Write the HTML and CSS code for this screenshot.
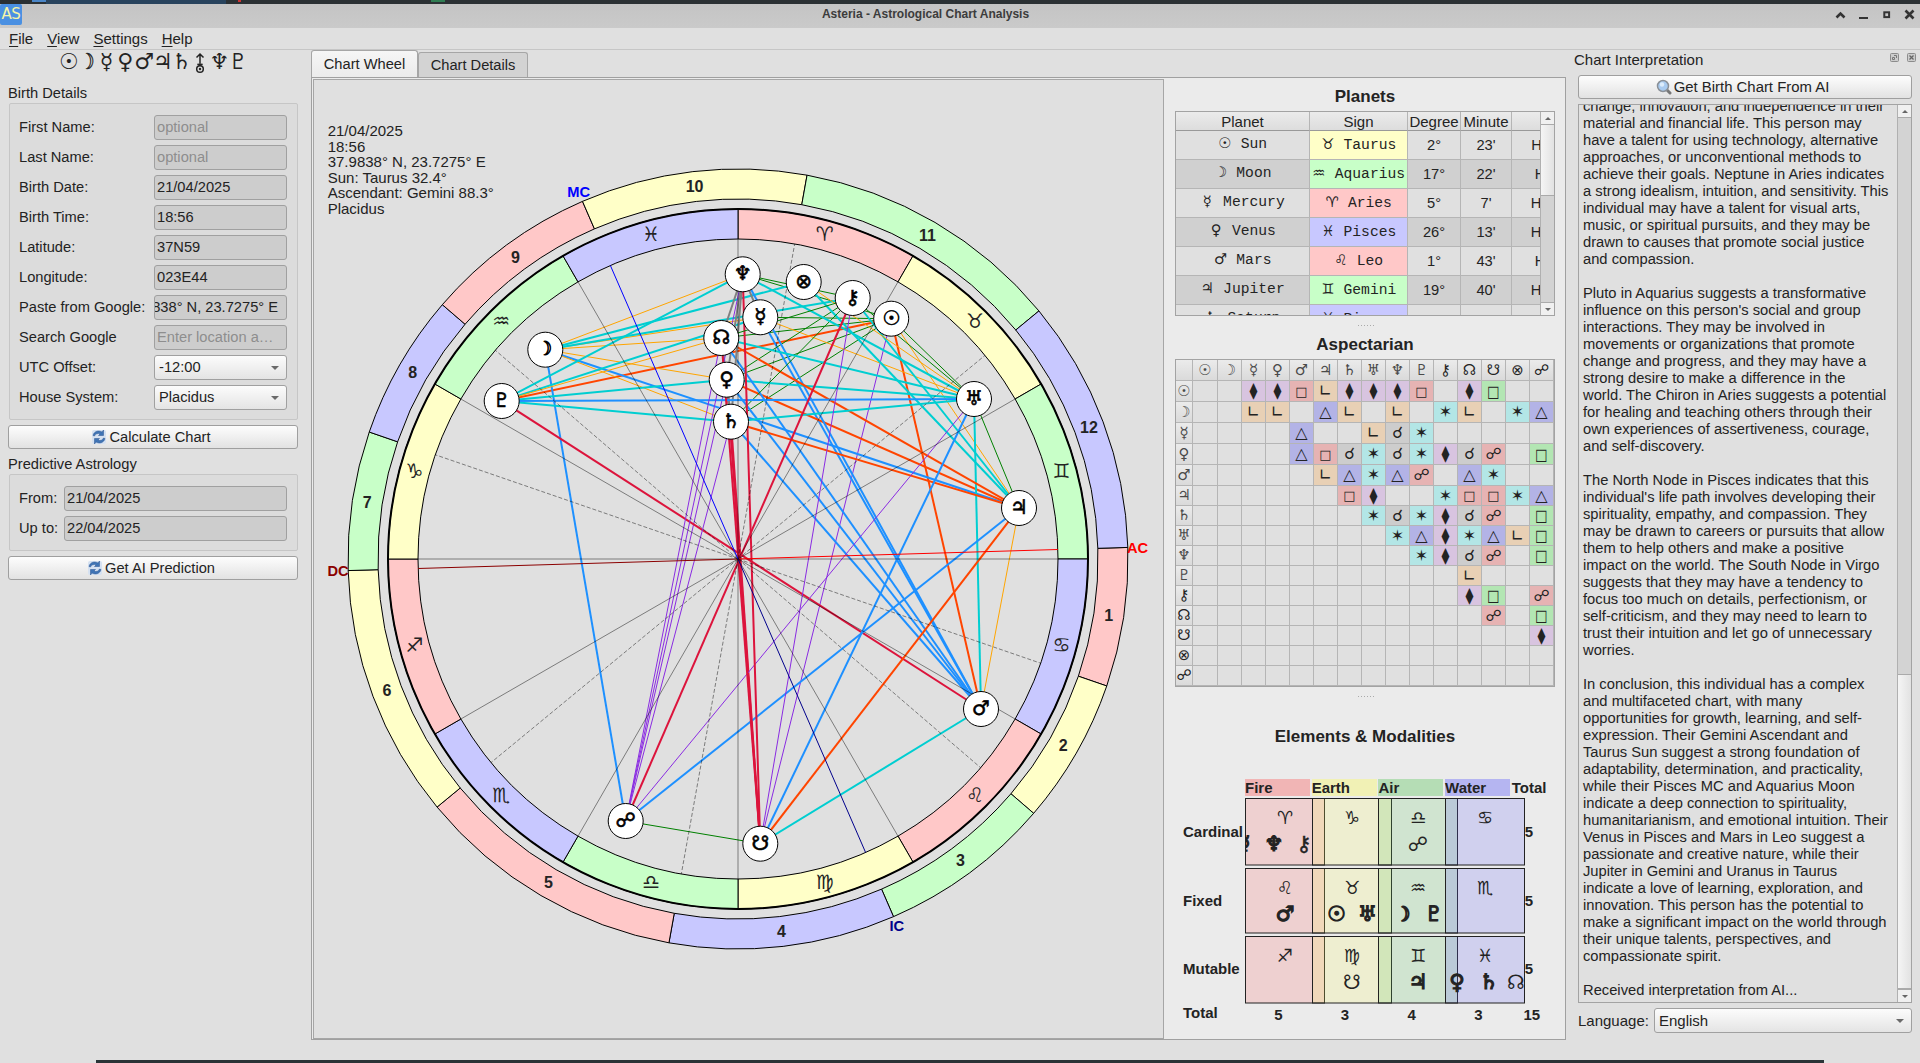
FILE: index.html
```html
<!DOCTYPE html>
<html lang="en">
<head>
<meta charset="utf-8">
<title>Asteria - Astrological Chart Analysis</title>
<link rel="stylesheet" href="styles.css">
</head>
<body>
<svg width="0" height="0" class="defs">
  <symbol id="refresh" viewBox="0 0 16 16">
    <rect x="1" y="1" width="14" height="14" rx="2" fill="#d5e1f1"/>
    <path d="M2 6.500C3 2.500 7 .8 11 3L12.500 1V6.500H7.500L9 5C7 4 4.500 4.500 3.500 7ZM14 9.500C13 13.500 9 15.200 5 13L3.500 15V9.500H8.500L7 11C9 12 11.500 11.500 12.500 9Z" fill="#3f74b5" stroke="#2a5590" stroke-width=".5"/>
  </symbol>
</svg>
<div class="desk-top"><i class="c1"></i><i class="c2"></i><i class="c3"></i><i class="c4"></i></div>
<header class="titlebar">
  <span class="app-icon">AS</span>
  <span class="title">Asteria - Astrological Chart Analysis</span>
  <svg class="winbtns" width="96" height="24" fill="none" stroke="#333" stroke-width="2.600">
    <path d="M12.500 13.500L16.500 9.500L20.500 13.500"/><path d="M35 14H44" stroke-width="2"/><rect x="60.300" y="8.300" width="4.800" height="4.800" stroke-width="2"/><path d="M81.500 6.500L89.500 14.500M89.500 6.500L81.500 14.500"/>
  </svg>
</header>
<nav class="menubar"><span><u>F</u>ile</span><span><u>V</u>iew</span><span><u>S</u>ettings</span><span><u>H</u>elp</span></nav>
<main class="workspace">
  <aside class="left">
    <div class="logo"><span>☉</span><span class="moon">☽</span><span>☿</span><span>♀</span><span>♂</span><span>♃</span><span>♄</span><span><svg width="10" height="22" fill="none" stroke="#232323" stroke-width="1.500"><path d="M5 13.500V2M1.500 5.500L5 2L8.500 5.500M2.500 12L5 13.500L7.500 12"/><circle cx="5" cy="17" r="3.300"/><circle cx="5" cy="17" r=".5"/></svg></span><span>♆</span><span>♇</span></div>
    <h2 class="cap">Birth Details</h2>
    <section class="group birth">
      <label>First Name:</label><div class="field ph">optional</div>
      <label>Last Name:</label><div class="field ph">optional</div>
      <label>Birth Date:</label><div class="field">21/04/2025</div>
      <label>Birth Time:</label><div class="field">18:56</div>
      <label>Latitude:</label><div class="field">37N59</div>
      <label>Longitude:</label><div class="field">023E44</div>
      <label>Paste from Google:</label><div class="field scrolled"><span>838° N, 23.7275° E</span></div>
      <label>Search Google</label><div class="field ph">Enter location a…</div>
      <label>UTC Offset:</label><div class="combo">-12:00</div>
      <label>House System:</label><div class="combo">Placidus</div>
    </section>
    <button class="btn"><svg width="16" height="16"><use href="#refresh"/></svg>Calculate Chart</button>
    <h2 class="cap cap2">Predictive Astrology</h2>
    <section class="group predict">
      <label>From:</label><div class="field">21/04/2025</div>
      <label>Up to:</label><div class="field">22/04/2025</div>
    </section>
    <button class="btn"><svg width="16" height="16"><use href="#refresh"/></svg>Get AI Prediction</button>
  </aside>
  <section class="center">
    <div class="tabs"><div class="tab active">Chart Wheel</div><div class="tab">Chart Details</div></div>
    <div class="pane">
      <div class="wheel-view"><svg id="wheel" width="849" height="958" viewBox="314 80 849 958"></svg></div>
      <div class="side">
        <h3 class="t1">Planets</h3>
        <div class="frame planets">
          <div class="prows" id="planets"></div>
          <div class="sbar"><b class="up"></b><i class="thumb"></i><em></em><b class="down"></b></div>
        </div>
        <div class="hdots"></div>
        <h3 class="t2">Aspectarian</h3>
        <div class="frame aspects" id="aspects"></div>
        <div class="hdots"></div>
        <h3 class="t3">Elements &amp; Modalities</h3>
        <div class="elements" id="elements"></div>
      </div>
    </div>
  </section>
  <aside class="dock">
    <div class="dock-title"><span>Chart Interpretation</span>
      <svg width="27" height="10" fill="none" stroke="#8c8c8c"><rect x=".5" y=".5" width="8" height="8" rx="1" fill="#ccc"/><path d="M4 2.500H6.500V5M2.500 4.500H4.500V6.500H2.500Z" stroke="#777"/><rect x="17.500" y=".5" width="8" height="8" rx="1" fill="#ccc"/><path d="M19.500 2.500L23.500 6.500M23.500 2.500L19.500 6.500" stroke="#666" stroke-width="1.300"/></svg>
    </div>
    <button class="btn"><svg width="16" height="17"><path d="M10 10L14 14" stroke="#777" stroke-width="3" stroke-linecap="round"/><circle cx="7" cy="7" r="5.500" fill="#a9cbf0" stroke="#8a9097" stroke-width="1.500"/><circle cx="6" cy="5.500" r="2.200" fill="#dcecfb"/></svg>Get Birth Chart From AI</button>
    <div class="frame textedit">
<div class="txt">change, innovation, and independence in their
material and financial life. This person may
have a talent for using technology, alternative
approaches, or unconventional methods to
achieve their goals. Neptune in Aries indicates
a strong idealism, intuition, and sensitivity. This
individual may have a talent for visual arts,
music, or spiritual pursuits, and they may be
drawn to causes that promote social justice
and compassion.

Pluto in Aquarius suggests a transformative
influence on this person's social and group
interactions. They may be involved in
movements or organizations that promote
change and progress, and they may have a
strong desire to make a difference in the
world. The Chiron in Aries suggests a potential
for healing and teaching others through their
own experiences of assertiveness, courage,
and self-discovery.

The North Node in Pisces indicates that this
individual's life path involves developing their
spirituality, empathy, and compassion. They
may be drawn to careers or pursuits that allow
them to help others and make a positive
impact on the world. The South Node in Virgo
suggests that they may have a tendency to
focus too much on details, perfectionism, or
self-criticism, and they may need to learn to
trust their intuition and let go of unnecessary
worries.

In conclusion, this individual has a complex
and multifaceted chart, with many
opportunities for growth, learning, and self-
expression. Their Gemini Ascendant and
Taurus Sun suggest a strong foundation of
adaptability, determination, and practicality,
while their Pisces MC and Aquarius Moon
indicate a deep connection to spirituality,
humanitarianism, and emotional intuition. Their
Venus in Pisces and Mars in Leo suggest a
passionate and creative nature, while their
Jupiter in Gemini and Uranus in Taurus
indicate a love of learning, exploration, and
innovation. This person has the potential to
make a significant impact on the world through
their unique talents, perspectives, and
compassionate spirit.

Received interpretation from AI...</div>
      <div class="sbar"><b class="up"></b><em></em><i class="thumb"></i><b class="down"></b></div>
    </div>
    <div class="lang"><span>Language:</span><div class="combo">English</div></div>
  </aside>
</main>
<div class="desk-bottom"></div>
<script src="chart.js"></script>
</body>
</html>
```
FILE: styles.css
```css
* { box-sizing: border-box; }
body { margin: 0; width: 1920px; height: 1063px; overflow: hidden; display: flex; flex-direction: column; background: #e0e0e0; color: #232323; font: 14.667px/17px "Liberation Sans", Arial, "DejaVu Sans", sans-serif; }
.defs { position: absolute; }
.desk-top { height: 4px; flex: none; background: #2b3134; display: flex; }
.desk-top i { height: 2px; width: 14px; background: #4a90e2; }
.desk-top .c1 { margin-left: 32px; background: #4a86c8; }
.desk-top .c2 { width: 180px; height: 4px; background: #28435d; }
.desk-top .c3 { width: 3px; margin-left: 12px; background: #c33; }
.desk-top .c4 { margin-left: 190px; background: #2f7d52; }
.titlebar { height: 24px; flex: none; background: linear-gradient(#c4c4c4, #cacaca); display: flex; align-items: center; justify-content: space-between; }
.app-icon { width: 22px; height: 21px; background: #4a90e2; color: #f5f5a8; border-radius: 2px; font: 15px/21px "DejaVu Sans", sans-serif; text-align: center; letter-spacing: -.5px; align-self: flex-start; }
.title { font-weight: bold; font-size: 12px; line-height: 20px; align-self: flex-start; margin-left: 5px; color: #3c3c3c; }
.menubar { height: 22px; flex: none; border-bottom: 1px solid #c6c6c6; padding: 2px 0 0 9px; display: flex; gap: 14px; font-size: 15px; line-height: 17px; }
.menubar u { text-underline-offset: 2px; }
.workspace { flex: 1; display: grid; grid-template-columns: 311px 1255px 354px; min-height: 0; }
.left { padding: 0 13px 0 8px; }
.logo { display: flex; justify-content: center; height: 27px; padding-left: 1px; font: 22px/24px "DejaVu Sans", sans-serif; }
.logo span { width: 18.8px; display: flex; justify-content: center; }
.logo .moon { transform: scaleX(.72); -webkit-text-stroke: .5px; }
.logo svg { margin-top: 2px; }
h2, h3 { margin: 0; font-size: inherit; font-weight: normal; }
.cap { height: 26px; line-height: 17px; padding-top: 8px; }
.group { border: 1px solid #c6c6c6; border-radius: 2px; background: #dcdcdc; margin-left: 1px; display: grid; align-content: start; row-gap: 5px; padding: 11px 10px 0 9px; }
.group label { line-height: 24px; white-space: nowrap; }
.birth { height: 317px; grid-template-columns: 135px 133px; }
.predict { height: 77px; grid-template-columns: 45px 223px; }
.field, .combo { height: 25px; border: 1px solid #a0a0a0; border-radius: 3px; background: #cdcdcd; padding-left: 2px; line-height: 23px; white-space: nowrap; overflow: hidden; }
.ph { color: #8e8e8e; }
.scrolled { display: flex; justify-content: flex-end; padding: 0 8px 0 0; }
.combo { background: linear-gradient(#fcfcfc, #e4e4e4); padding: 0 7px 0 4px; display: flex; justify-content: space-between; align-items: center; }
.combo::after { content: ""; border: 4px solid transparent; border-top-color: #6a6a6a; border-bottom: 0; }
.btn { width: 100%; height: 24px; margin: 5px 0 0; padding: 0 4px 0 0; border: 1px solid #9f9f9f; border-radius: 3px; background: linear-gradient(#fdfdfd, #e2e2e2); font: inherit; color: inherit; display: flex; align-items: center; justify-content: center; gap: 2px; }
.left .cap2 { height: 25px; padding-top: 7px; }
.center { display: flex; flex-direction: column; }
.tabs { display: flex; height: 27px; align-items: flex-end; }
.tab { border: 1px solid #a6a6a6; border-bottom: 0; border-radius: 3px 3px 0 0; background: #d3d3d3; width: 110px; height: 25px; line-height: 25px; text-align: center; }
.tab.active { width: 107px; height: 27px; line-height: 26px; background: linear-gradient(#f6f6f6, #ebebeb); }
.pane { height: 963px; border: 1px solid #a0a0a0; background: #ebebeb; display: grid; grid-template-columns: 852px 401px; padding-top: 1px; }
.wheel-view { border: 1px solid #a6a6a6; margin-left: 1px; height: 960px; background: #e0e0e0; }
.wheel-view svg { display: block; }
.side { padding-left: 11px; width: 391px; }
h3 { font-weight: bold; font-size: 17px; text-align: center; line-height: 20px; }
.t1 { padding-top: 8px; height: 32px; }
.frame { border: 1px solid #a3a3a3; background: #e0e0e0; }
.planets { height: 205px; display: flex; overflow: hidden; }
.prows { flex: 1; overflow: hidden; }
.prow { display: grid; grid-template-columns: 134px 98px 53px 51px 101px; height: 29px; }
.prow.head { height: 19px; background: linear-gradient(#ebebeb, #dcdcdc); }
.prow div { border-right: 1px solid #b5b5b5; border-bottom: 1px solid #b5b5b5; text-align: center; white-space: pre; overflow: hidden; line-height: 29px; }
.prow.head div { line-height: 19px; border-bottom-color: #999; font-size: 15px; }
.prow.alt { background: #d0d0d0; }
.prow .mono { font-family: "Liberation Mono", "DejaVu Sans", monospace; line-height: 29px; }
.prow div.pl { line-height: 27px; }
.mono span { display: inline-block; font-family: "DejaVu Sans", sans-serif; width: 14px; line-height: 1; }
.fire { background: #ffc8c8; } .earth { background: #ffffc8; } .air { background: #c8ffc8; } .water { background: #c8c8ff; }
.sbar { width: 14px; flex: none; border-left: 1px solid #b0b0b0; display: flex; flex-direction: column; background: #d3d3d3; }
.sbar b { height: 13px; flex: none; background: #f0f0f0; border-bottom: 1px solid #aaa; display: flex; align-items: center; justify-content: center; }
.sbar b::after { content: ""; border: 3px solid transparent; }
.sbar .up::after { border-bottom-color: #666; border-top: 0; }
.sbar .down::after { border-top-color: #666; border-bottom: 0; }
.sbar .down { border-top: 1px solid #aaa; border-bottom: 0; }
.sbar i { background: linear-gradient(90deg, #f5f5f5, #e2e2e2); border: 1px solid #aaa; border-width: 0 0 1px; }
.sbar em { flex: 1; }
.planets .thumb { height: 71px; }
.hdots { background: radial-gradient(circle, #aaa 0 .8px, transparent 1px) 0 0 / 3px 3px; width: 17px; height: 2px; margin: 8px auto; }
.t2 { height: 25px; line-height: 22px; }
.aspects { height: 328px; display: grid; grid-template-columns: 17px 25px repeat(14, 24px); grid-template-rows: 21px repeat(5, 21px) repeat(10, 20px); font: 16px/20px "DejaVu Sans", sans-serif; overflow: hidden; }
.aspects div { border-right: 1px solid #b5b5b5; border-bottom: 1px solid #b5b5b5; display: flex; align-items: center; justify-content: center; overflow: hidden; line-height: 1; }
.aspects .h { background: linear-gradient(#ebebeb, #dadada); font-size: 15px; }
.aspects .h.thin { color: #4a4a4a; }
.aspects .box { font-size: 13px; }
.aspects .tall { font-size: 13px; }
.tall span { transform: scaleY(1.25); }
.semi { background: #d8c4e0; } .sq { background: #e6b3b3; } .ssq { background: #e8d0b5; } .tri { background: #b3b3e6; } .sex { background: #b3e6e6; } .con { background: #cdcdcd; } .opp { background: #e6b3b3; } .qui { background: #b3e6b3; }
.t3 { padding-top: 22px; height: 74px; }
.elements { display: grid; grid-template-columns: 62px repeat(4, 66.700px) 40px; grid-template-rows: 19px 70px 68px 68px 21px; font-weight: bold; margin-left: 8px; font-size: 15px; }
.elements .eh { height: 17px; width: 65px; line-height: 18px; }
.elements .lab { align-self: center; padding-bottom: 3px; }
.elements svg { overflow: hidden; width: 80px; display: block; }
.elements .tot { align-self: center; padding: 0 0 3px 13px; }
.elements .num { text-align: center; line-height: 22px; padding: 0; }
.dock { padding: 0 8px 0 12px; }
.dock .btn { font-size: 14.900px; padding-right: 5px; }
.dock-title { display: flex; justify-content: space-between; height: 20px; margin: 0 -4px; font-size: 15px; line-height: 19px; align-items: flex-start; }
.dock-title svg { margin-top: 3px; margin-right: -1px; }
.textedit { height: 899px; margin-top: 5px; display: flex; overflow: hidden; }
.dock .textedit .txt { flex: 1; white-space: pre; margin-top: -7px; padding-left: 4px; font-size: 14.720px; }
.textedit .thumb { height: 315px; border-top-width: 1px; }
.lang { display: flex; margin-top: 5px; align-items: center; justify-content: space-between; font-size: 15px; }
.lang .combo { width: 258px; }
.desk-bottom { flex: none; height: 3px; margin: 0 96px; background: #2b3437; }
```
FILE: chart.js
```js
const CX = 738, CY = 559;
const rad = d => d * Math.PI / 180;
const pt = (r, a) => [CX + r * Math.sin(rad(a)), CY - r * Math.cos(rad(a))];
const fill = { fire: '#ffc8c8', earth: '#ffffc8', air: '#c8ffc8', water: '#c8c8ff' };
const VS = '\uFE0E';

function ring(r1, r2, a, b, color, w = 1) {
  if (b < a) b += 360;
  const p = [pt(r2, a), pt(r2, b), pt(r1, b), pt(r1, a)].map(q => q.map(n => n.toFixed(2)).join(' '));
  return `<path d="M${p[0]}A${r2} ${r2} 0 0 1 ${p[1]}L${p[2]}A${r1} ${r1} 0 0 0 ${p[3]}Z" fill="${color}" stroke="#000" stroke-width="${w}"/>`;
}
const line = (a, b, c, w, extra = '') =>
  `<line x1="${a[0]}" y1="${a[1]}" x2="${b[0]}" y2="${b[1]}" stroke="${c}" stroke-width="${w}" ${extra}/>`;
const text = (x, y, s, size, extra = '') =>
  `<text x="${x}" y="${y}" font-size="${size}" ${extra}>${s}</text>`;
const mid = 'text-anchor="middle"';
const sym = mid + ' font-family="DejaVu Sans"';
/* the moon is drawn as a narrow crescent */
const glyph = (x, y, g, size, ink, w) => g === '☽'
  ? `<g transform="translate(${x} ${y - 0.5}) scale(.72 .95)">${text(0, 0, g + VS, size, sym + ` fill="${ink}" stroke="${ink}" stroke-width="${w + 0.5}"`)}</g>`
  : text(x, y, g + VS, size, sym + ` fill="${ink}" stroke="${ink}" stroke-width="${w}"`);

const bodies = [
  ['☉', 891.2, 318.7], ['☽', 545.3, 349.7], ['☿', 760.3, 317.3], ['♀', 726.7, 379.7], ['♂', 981, 709],
  ['♃', 1019, 508], ['♄', 731, 421.7], ['♅', 974, 399], ['♆', 742.7, 274.3], ['♇', 501.7, 401],
  ['⚷', 852.7, 298], ['☊', 721.3, 338], ['☋', 760.3, 843.7], ['⊗', 803.7, 282], ['☍', 625.7, 821]
];
/* one row per body, one letter per body in the same order:
   s semisextile, S square, l semisquare, t trine, x sextile, c conjunction, o opposition, q quincunx */
const rows = [
  '..ssSlsssS.sq..', '..ll.tl.l.xl.xt', '....t..lcx.....', '....tScxcxsco.q', '.....ltxto.tx..',
  '......Ss..xSSxt', '.......xcxsco.q', '........xtsxtlq', '.........xsco.q', '...........l...',
  '...........sq.o', '............o.q', '..............s', '...............', '...............'
];
const kinds = {
  s: ['semi', '⧫', 'green', 1], S: ['sq box', '□', '#ff4500', 2], l: ['ssq', '∟', 'orange', 1], t: ['tri', '△', '#1e90ff', 2],
  x: ['sex', '✶', '#00ced1', 2], c: ['con', '☌', 'gray', 2], o: ['opp', '☍', '#dc143c', 2], q: ['qui tall', '<span>□</span>', '#8a2be2', 1]
};
const elems = ['fire', 'earth', 'air', 'water'];
const cusps = [88.3, 109, 130.7, 156.5, 190.2, 230.5, 268.3, 289, 310.7, 336.5, 10.2, 50.5];
const signs = '♈♉♊♋♌♍♎♏♐♑♒♓';

let s = '';
cusps.forEach((a, i) => { s += ring(360, 390, a, cusps[(i + 1) % 12], fill[elems[i % 4]]); });
for (let i = 0; i < 12; i++) s += ring(320, 350, i * 30, i * 30 + 30, fill[elems[i % 4]]);
s += `<circle cx="${CX}" cy="${CY}" r="350" fill="none" stroke="#000" stroke-width="2"/>`;
rows.forEach((r, i) => [...r].forEach((k, j) => {
  if (k !== '.') s += line(bodies[i].slice(1), bodies[j].slice(1), kinds[k][2], kinds[k][3]);
}));
for (let a = 0; a < 360; a += 30) s += line([CX, CY], pt(320, a), 'rgba(0,0,0,.45)', 1);
cusps.forEach((a, i) => {
  if (i % 3) s += line([CX, CY], pt(320, a), 'rgba(0,0,0,.45)', 1, 'stroke-dasharray="4 2"');
  else s += line([CX, CY], pt(320, a), ['#f00', '#00008b', '#8b0000', '#00f'][i / 3], 1);
  const b = cusps[(i + 1) % 12], m = pt(375, (a + b + (b < a ? 360 : 0)) / 2);
  s += text(m[0], m[1] + 5.5, i + 1, 16, mid + ' font-weight="bold"');
});
[...signs].forEach((g, i) => { const m = pt(335, i * 30 + 15); s += text(m[0], m[1] + 6, g + VS, 20, sym); });
bodies.forEach(([g, x, y]) => {
  s += `<circle cx="${x}" cy="${y}" r="17.500" fill="#fff" stroke="#000"/>` + glyph(x, y + 6, g, 20, '#000', 0.6);
});
s += text(567.3, 197, 'MC', 14.667, 'font-weight="bold" fill="#00f"');
s += text(1127, 552.500, 'AC', 14.667, 'font-weight="bold" fill="#f00"');
s += text(327.5, 576, 'DC', 14.667, 'font-weight="bold" fill="#8b0000"');
s += text(889.5, 931, 'IC', 14.667, 'font-weight="bold" fill="#00008b"');
['21/04/2025', '18:56', '37.9838° N, 23.7275° E', 'Sun: Taurus 32.4°', 'Ascendant: Gemini 88.3°', 'Placidus']
  .forEach((t, i) => { s += text(327.7, 136 + i * 15.6, t, 15); });
document.getElementById('wheel').innerHTML = `<g fill="#232323">${s}</g>`;

/* planet positions */
const pos = [
  ['☉', 'Sun', '♉', 'Taurus', 'earth', '2°', "23'", 'House 11'], ['☽', 'Moon', '♒', 'Aquarius', 'air', '17°', "22'", 'House 9'],
  ['☿', 'Mercury', '♈', 'Aries', 'fire', '5°', "7'", 'House 10'], ['♀', 'Venus', '♓', 'Pisces', 'water', '26°', "13'", 'House 10'],
  ['♂', 'Mars', '♌', 'Leo', 'fire', '1°', "43'", 'House 2'], ['♃', 'Jupiter', '♊', 'Gemini', 'air', '19°', "40'", 'House 12'],
  ['♄', 'Saturn', '♓', 'Pisces', 'water', '', '', '']
];
document.getElementById('planets').innerHTML =
  '<div class="prow head"><div>Planet</div><div>Sign</div><div>Degree</div><div>Minute</div><div>House</div></div>' +
  pos.map((p, i) => `<div class="prow ${i % 2 ? 'alt' : ''}"><div class="mono pl"><span>${p[0]}${VS}</span> ${p[1]}</div>` +
    `<div class="mono ${p[4]}"><span>${p[2]}${VS}</span> ${p[3]}</div><div>${p[5]}</div><div>${p[6]}</div><div>${p[7]}</div></div>`).join('');

/* aspect grid */
const head = (b, i) => `<div class="h ${i < 10 ? 'thin' : ''}">${b[0]}${VS}</div>`;
document.getElementById('aspects').innerHTML = '<div class="h"></div>' + bodies.map(head).join('') +
  rows.map((r, i) => head(bodies[i], i) + [...r].map(k => k === '.' ? '<div></div>' : `<div class="${kinds[k][0]}">${kinds[k][1]}</div>`).join('')).join('');

/* elements and modalities */
const tint = { fire: '250,100,100', earth: '250,250,100', air: '100,200,100', water: '100,100,250' };
const cells = [
  ['Cardinal', 67.500, [['♈', '☿', -41, '♆', -11, '⚷', 19], ['♑'], ['♎', '☍', 0], ['♋']]],
  ['Fixed', 65.500, [['♌', '♂', 0], ['♉', '☉', -15.500, '♅', 15.500], ['♒', '☽', -15, '♇', 16], ['♏']]],
  ['Mutable', 67.500, [['♐'], ['♍', '☋', 0], ['♊', '♃', 0], ['♓', '♀', -28, '♄', 4, '☊', 31]]]
];
let e = '<div></div>' + ['Fire', 'Earth', 'Air', 'Water'].map((n, i) =>
  `<div class="eh" style="background:rgba(${tint[elems[i]]},.4)">${n}</div>`).join('') + '<div class="eh">Total</div>';
cells.forEach(([n, h, cs]) => {
  e += `<div class="lab">${n}</div>`;
  cs.forEach((c, i) => {
    let g = text(40, 26, c[0] + VS, 18, sym);
    for (let k = 1; k < c.length; k += 2) {
      const light = /[☊☋☍]/.test(c[k]);
      g += glyph(40 + c[k + 1], 53, c[k], light ? 20 : 21, '#232323', light ? 0 : c[k] === '⚷' ? 0.4 : 1.2);
    }
    e += `<svg height="${h}" font-weight="normal" fill="#232323"><rect x=".5" y=".5" width="79" height="${h - 1}" fill="rgba(${tint[elems[i]]},.2)" stroke="#222"/>${g}</svg>`;
  });
  e += '<div class="tot">5</div>';
});
e += '<div>Total</div>'.replace('<div>', '<div class="foot">') + [5, 3, 4, 3].map(n => `<div class="num">${n}</div>`).join('') + '<div class="num">15</div>';
document.getElementById('elements').innerHTML = e;
```
